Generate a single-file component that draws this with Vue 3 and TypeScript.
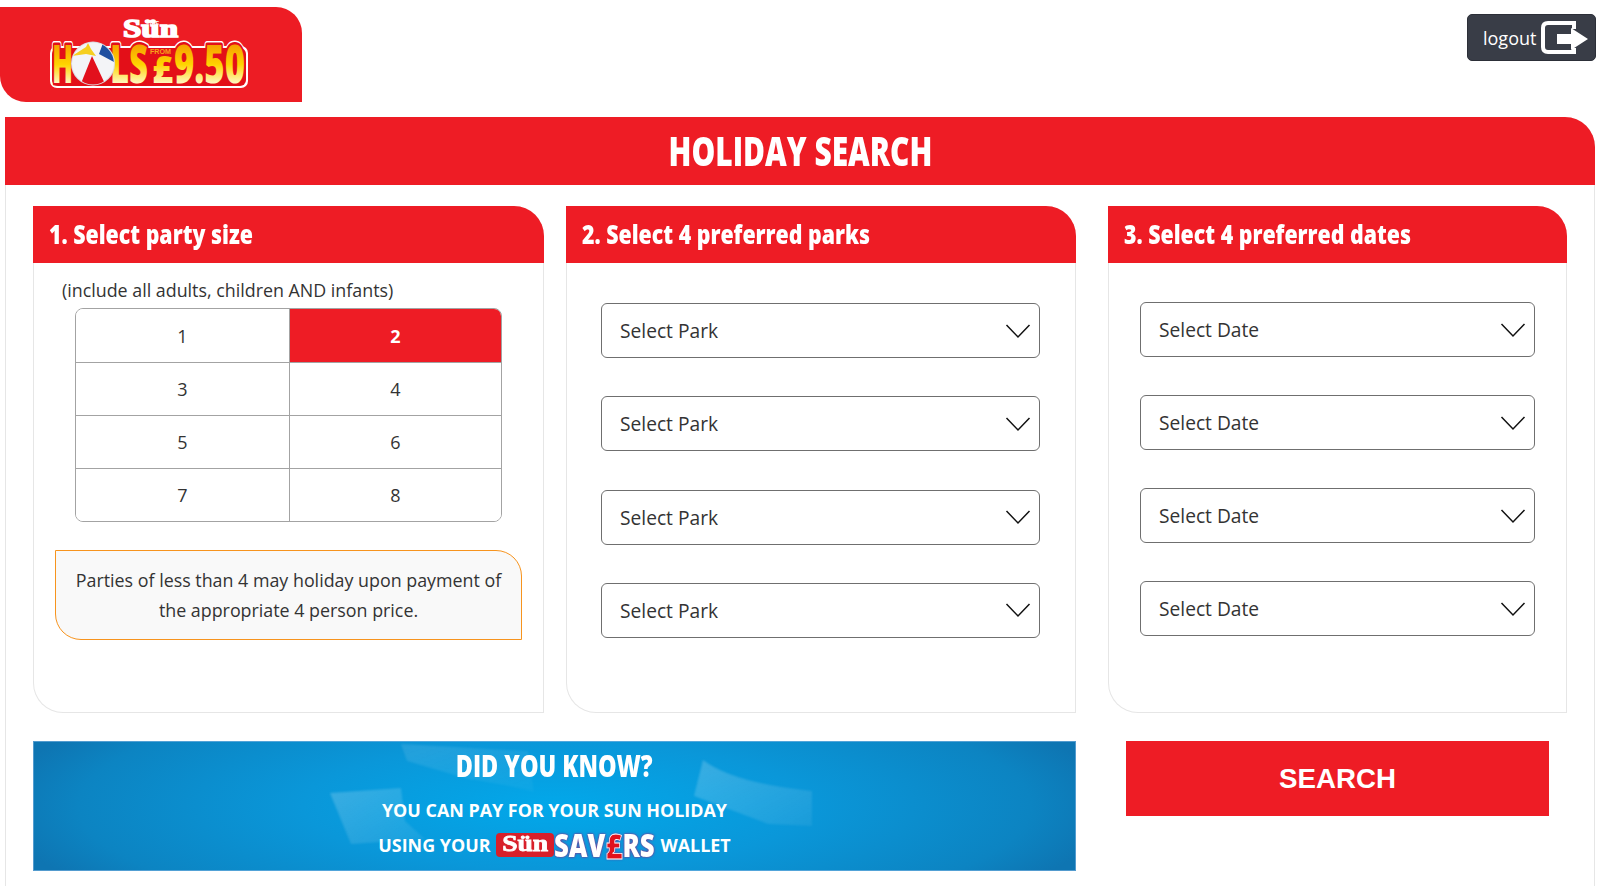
<script setup lang="ts">
import { ref } from 'vue'

const sizes = [1, 2, 3, 4, 5, 6, 7, 8]
const party = ref(2)
const parks = [1, 2, 3, 4]
const dates = [1, 2, 3, 4]
</script>

<template>
  <div class="page">
    <header class="top">
      <div class="logo">
        <svg width="302" height="95" viewBox="0 7 302 95" class="logo-svg">
          <defs>
            <linearGradient id="hols" gradientUnits="userSpaceOnUse" x1="0" y1="45" x2="0" y2="84">
              <stop offset="0" stop-color="#f6a000" />
              <stop offset="0.5" stop-color="#ffd400" />
              <stop offset="1" stop-color="#fff9c8" />
            </linearGradient>
            <clipPath id="ballclip"><circle cx="93" cy="63.5" r="21" /></clipPath>
          </defs>
          <text x="123" y="37" class="sun" textLength="55" lengthAdjust="spacingAndGlyphs">Sün</text>
          <text x="149" y="24.5" class="the">THE</text>

          <rect x="50" y="46" width="198" height="42" rx="7" fill="#fff" />
          <g class="outer">
            <text x="52" y="83" textLength="21" lengthAdjust="spacingAndGlyphs">H</text>
            <text x="110" y="83" textLength="38" lengthAdjust="spacingAndGlyphs">LS</text>
            <text x="152" y="83" class="small" textLength="21" lengthAdjust="spacingAndGlyphs">£</text>
            <text x="174" y="83" textLength="71" lengthAdjust="spacingAndGlyphs">9.50</text>
          </g>
          <rect x="52" y="48" width="194" height="38" rx="6" fill="#e30f18" />
          <g class="inner">
            <text x="52" y="83" textLength="21" lengthAdjust="spacingAndGlyphs">H</text>
            <text x="110" y="83" textLength="38" lengthAdjust="spacingAndGlyphs">LS</text>
            <text x="152" y="83" class="small" textLength="21" lengthAdjust="spacingAndGlyphs">£</text>
            <text x="174" y="83" textLength="71" lengthAdjust="spacingAndGlyphs">9.50</text>
          </g>
          <g class="fillg" fill="url(#hols)">
            <text x="52" y="83" textLength="21" lengthAdjust="spacingAndGlyphs">H</text>
            <text x="110" y="83" textLength="38" lengthAdjust="spacingAndGlyphs">LS</text>
            <text x="152" y="83" class="small" textLength="21" lengthAdjust="spacingAndGlyphs">£</text>
            <text x="174" y="83" textLength="71" lengthAdjust="spacingAndGlyphs">9.50</text>
          </g>
          <text x="150" y="54" class="from" textLength="21" lengthAdjust="spacingAndGlyphs">FROM</text>

          <circle cx="93" cy="63.5" r="22" fill="#d9dde2" />
          <circle cx="93" cy="63.5" r="21" fill="#f3f4f7" />
          <g clip-path="url(#ballclip)">
            <path d="M92 56 L80 86 L106 86 Z" fill="#e2101c" />
            <path d="M72 56 L86 47 L88 43 L91 49 L96 56 L86 54 Z" fill="#f6cf1f" />
            <path d="M99 54 L103 43 L116 51 L116 63 Z" fill="#1f4fa0" />
          </g>
        </svg>
      </div>
      <button class="logout" type="button">
        <span>logout</span>
        <svg width="48" height="33" viewBox="0 0 48 33" fill="none">
          <path d="M33 8 V2 H7 Q2 2 2 7 V26 Q2 31 7 31 H33 V27" stroke="#fff" stroke-width="4" />
          <path d="M16 13 H30 V7 L47 18 L30 29 V23 H16 Z" fill="#fff" />
        </svg>
      </button>
    </header>

    <main class="main">
      <h1 class="title"><span class="sq-title">HOLIDAY SEARCH</span></h1>
      <div class="panels">
        <section class="panel p1">
          <h2 class="panel-head"><span class="sq-head">1. Select party size</span></h2>
          <p class="hint">(include all adults, children AND infants)</p>
          <div class="party">
            <button
              v-for="n in sizes"
              :key="n"
              type="button"
              class="cell"
              :class="{ on: n === party, odd: n % 2 === 1 }"
              @click="party = n"
            >{{ n }}</button>
          </div>
          <p class="note">Parties of less than 4 may holiday upon payment of the appropriate 4 person price.</p>
        </section>

        <section class="panel p2">
          <h2 class="panel-head"><span class="sq-head">2. Select 4 preferred parks</span></h2>
          <div class="selects parks">
            <div v-for="p in parks" :key="p" class="select">
              <span>Select Park</span>
              <svg width="26" height="16" viewBox="0 0 26 16" fill="none"><path d="M1.5 2 L13 14 L24.5 2" stroke="#111" stroke-width="1.5" /></svg>
            </div>
          </div>
        </section>

        <section class="panel p3">
          <h2 class="panel-head"><span class="sq-head">3. Select 4 preferred dates</span></h2>
          <div class="selects datesel">
            <div v-for="d in dates" :key="d" class="select">
              <span>Select Date</span>
              <svg width="26" height="16" viewBox="0 0 26 16" fill="none"><path d="M1.5 2 L13 14 L24.5 2" stroke="#111" stroke-width="1.5" /></svg>
            </div>
          </div>
        </section>
      </div>

      <div class="bottom">
        <div class="banner">
          <svg class="notes" width="1043" height="130" viewBox="0 0 1043 130">
            <defs>
              <linearGradient id="note" x1="0" y1="0" x2="1" y2="1">
                <stop offset="0" stop-color="#fff" stop-opacity="0.2" />
                <stop offset="1" stop-color="#fff" stop-opacity="0.06" />
              </linearGradient>
            </defs>
            <path d="M368 3 L495 10 L501 51 Q465 42 435 38 L374 20 Z" fill="url(#note)" opacity="0.55" />
            <path d="M297 52 L368 47 L372 80 L392 98 L318 103 Z" fill="url(#note)" />
            <path d="M670 19 Q700 42 779 50 L779 85 L735 83 L661 55 Z" fill="url(#note)" />
          </svg>
          <div class="did"><span class="sq-did">DID YOU KNOW?</span></div>
          <div class="pay">YOU CAN PAY FOR YOUR SUN HOLIDAY</div>
          <div class="using">
            <span>USING YOUR</span>
            <span class="savers"><span class="sv-sun"><span class="sv-sun-text">Sün</span></span><span class="sv-word"><span class="sv-word-in">SAV<b>£</b>RS</span></span></span>
            <span>WALLET</span>
          </div>
        </div>
        <div class="search-wrap">
          <button type="button" class="search">SEARCH</button>
        </div>
      </div>
    </main>
  </div>
</template>

<style>
html, body { margin: 0; background: #fff; overflow: hidden; }
</style>

<style scoped>
.page {
  width: 1600px;
  height: 886px;
  overflow: hidden;
  box-sizing: border-box;
  padding-top: 7px;
  font-family: "Open Sans", "Liberation Sans", sans-serif;
  color: #333;
  background: #fff;
}
.top {
  display: flex;
  justify-content: space-between;
  align-items: flex-start;
  height: 110px;
}
.logo {
  width: 302px;
  height: 95px;
  background: #ed1c24;
  border-radius: 0 26px 0 26px;
}
.logo-svg { display: block; }
.sun {
  font: 700 25px "Liberation Serif", serif;
  fill: #fff;
  stroke: #fff;
  stroke-width: 1.6px;
}
.the {
  font: 700 5px "Liberation Sans", sans-serif;
  fill: #fff;
}
.outer text, .inner text, .fillg text {
  font: 800 53px "Open Sans", sans-serif;
}
.outer text.small, .inner text.small, .fillg text.small {
  font-size: 37px;
}
.outer text { fill: #fff; stroke: #fff; stroke-width: 8px; stroke-linejoin: round; }
.inner text { fill: #e30f18; stroke: #e30f18; stroke-width: 5px; stroke-linejoin: round; }
.from {
  font: 700 8px "Liberation Sans", sans-serif;
  fill: #f7a11a;
}
.logout {
  margin: 7px 4px 0 0;
  width: 129px;
  height: 47px;
  display: flex;
  align-items: center;
  box-sizing: border-box;
  padding: 0 0 0 15px;
  gap: 5px;
  background: #393d47;
  border: 1px solid #2c2f38;
  border-radius: 5px;
  color: #fff;
  font: 400 18px "Open Sans", sans-serif;
}
.main {
  box-sizing: border-box;
  margin-left: 5px;
  width: 1590px;
  height: 769px;
  border: 1px solid #e6e6e6;
  border-top: 0;
  border-bottom: 0;
  border-radius: 0 30px 0 0;
}
.title {
  margin: 0 -1px;
  height: 68px;
  text-align: center;
  background: #ee1c25;
  color: #fff;
  border-radius: 0 30px 0 0;
  font: 800 40px/68px "Open Sans", sans-serif;
  overflow: hidden;
}
.sq-title { display: inline-block; transform: scaleX(0.748); transform-origin: center; }
.panels {
  display: flex;
  margin: 21px 0 0 27px;
}
.panel {
  box-sizing: border-box;
  height: 507px;
  border: 1px solid #e6e6e6;
  border-top: 0;
  border-radius: 0 30px 0 30px;
}
.p1 { width: 511px; margin-right: 22px; }
.p2 { width: 510px; margin-right: 32px; }
.p3 { width: 459px; }
.panel-head {
  margin: 0 -1px;
  height: 57px;
  background: #ee1c25;
  color: #fff;
  border-radius: 0 30px 0 0;
  padding-left: 16px;
  font: 800 27px/55px "Open Sans", sans-serif;
  white-space: nowrap;
  overflow: hidden;
}
.sq-head { display: inline-block; transform: scaleX(0.79); transform-origin: left; }
.hint {
  margin: 14px 0 0 28px;
  font-size: 17.85px;
  line-height: 26px;
}
.party {
  display: grid;
  grid-template-columns: 214px 211px;
  grid-template-rows: 54px 53px 53px 52px;
  box-sizing: border-box;
  width: 427px;
  margin: 5px 0 0 41px;
  border: 1px solid #a3a3a3;
  border-radius: 8px;
  overflow: hidden;
}
.cell {
  appearance: none;
  border: 0;
  border-bottom: 1px solid #a3a3a3;
  background: #fff;
  color: #333;
  padding: 0;
  font: 400 18px "Open Sans", sans-serif;
}
.cell:nth-last-child(-n+2) { border-bottom: 0; }
.cell.odd { border-right: 1px solid #a3a3a3; }
.cell.on { background: #ee1c25; color: #fff; font-weight: 700; }
.note {
  box-sizing: border-box;
  width: 467px;
  height: 90px;
  margin: 28px 0 0 21px;
  padding: 14px 10px;
  background: #f9f9f9;
  border: 1px solid #f7941e;
  border-radius: 0 26px 0 26px;
  text-align: center;
  font-size: 17.85px;
  line-height: 30px;
}
.selects {
  display: flex;
  flex-direction: column;
}
.parks { margin: 40px 35px 0 34px; gap: 38.3px; }
.datesel { margin: 39px 31px 0 31px; gap: 38px; }
.select {
  box-sizing: border-box;
  height: 55px;
  display: flex;
  align-items: center;
  justify-content: space-between;
  padding: 0 8px 0 18px;
  border: 1px solid #6f6f6f;
  border-radius: 6px;
  font-size: 19.2px;
  background: #fff;
}
.bottom {
  display: flex;
  margin: 28px 0 0 27px;
}
.banner {
  position: relative;
  overflow: hidden;
  width: 1043px;
  height: 130px;
  flex: none;
  text-align: center;
  color: #fff;
  background: radial-gradient(ellipse 560px 140px at 50% 50%, #02a8ea 0%, #0a97d9 45%, #0c84c2 85%, #0e75b2 100%);
  box-shadow: inset 0 0 0 1px rgba(130, 180, 225, 0.6);
}
.notes { position: absolute; left: 0; top: 0; filter: blur(1px); }
.did {
  position: relative;
  margin-top: 7px;
  font: 800 30px/36px "Open Sans", sans-serif;
  white-space: nowrap;
}
.sq-did { display: inline-block; transform: scaleX(0.78); transform-origin: center; }
.pay {
  position: relative;
  margin-top: 13px;
  font: 700 17.9px/26px "Open Sans", sans-serif;
}
.using {
  position: relative;
  display: flex;
  justify-content: center;
  align-items: center;
  gap: 6px;
  font: 700 17.9px/26px "Open Sans", sans-serif;
  margin-top: 7px;
}
.savers {
  display: inline-flex;
  align-items: center;
  width: 158px;
  height: 30px;
}
.sv-sun {
  flex: none;
  width: 58px;
  height: 24px;
  background: #d81f2a;
  border-radius: 4px;
  font: 700 23px/22px "Liberation Serif", serif;
  color: #fff;
  -webkit-text-stroke: 0.8px #fff;
  text-align: center;
}
.sv-sun-text { display: inline-block; transform: scaleX(1.2); }
.sv-word {
  flex: none;
  width: 100px;
  height: 30px;
  font: 800 31px/30px "Open Sans", sans-serif;
  color: #fff;
  text-shadow: 0 0 2px #7a3b93, 0 0 3px #7a3b93;
  white-space: nowrap;
  text-align: left;
}
.sv-word-in { display: inline-block; transform: scaleX(0.83); transform-origin: left; }
.sv-word b { position: relative; top: 2px; color: #e2101c; font-weight: 800; font-size: 35px; line-height: 28px; -webkit-text-stroke: 0.8px #fff; }
.search-wrap {
  flex: 1;
  padding-left: 50px;
}
.search {
  appearance: none;
  width: 423px;
  height: 75px;
  border: 0;
  padding: 1px 0 0;
  background: #ee1c25;
  color: #fff;
  font: 700 27.7px "Liberation Sans", sans-serif;
}
</style>
